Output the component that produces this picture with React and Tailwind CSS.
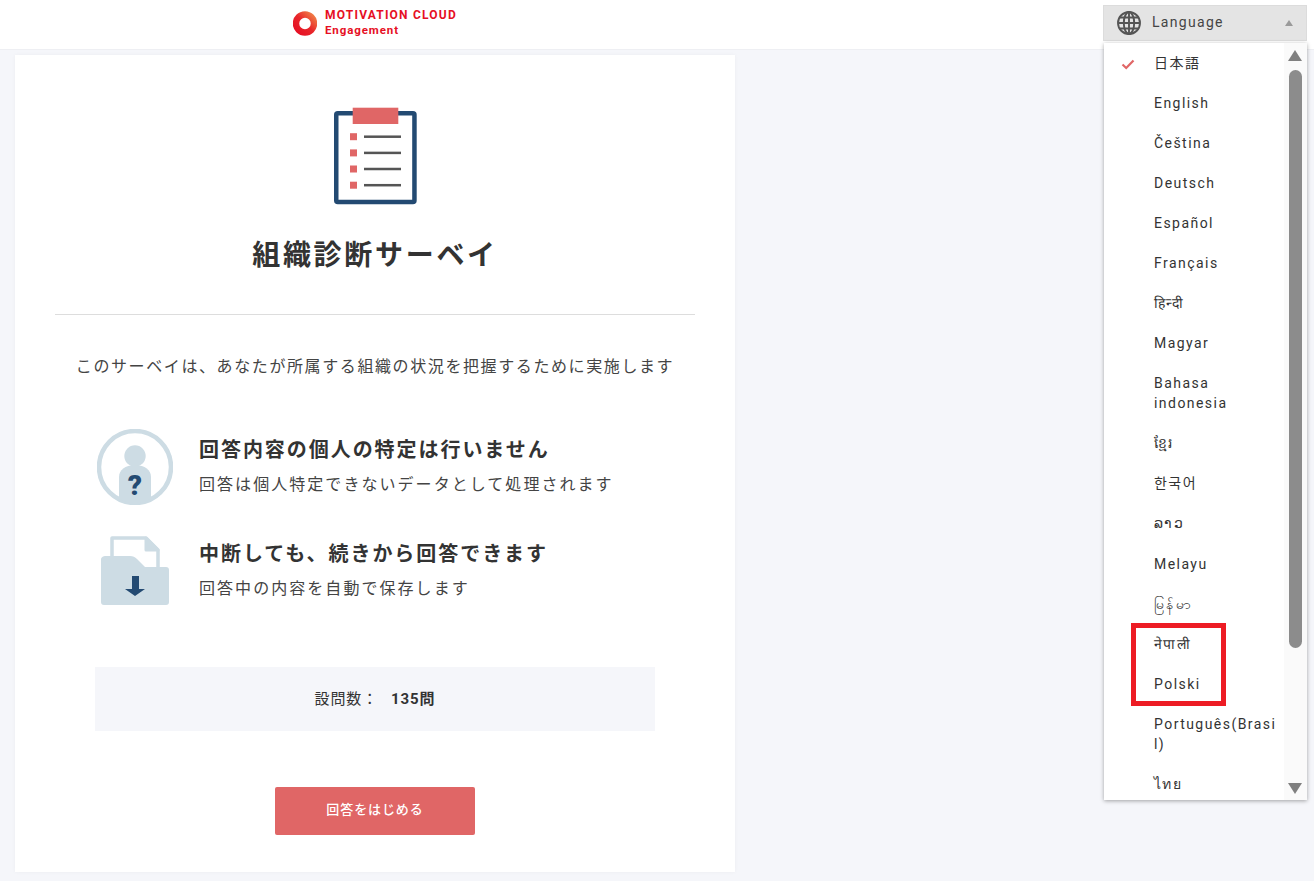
import React from 'react';

const FONT = "font-['Roboto','Noto_Sans_CJK_JP',sans-serif]";

const languages = [
  { label: '日本語', checked: true },
  { label: 'English' },
  { label: 'Čeština' },
  { label: 'Deutsch' },
  { label: 'Español' },
  { label: 'Français' },
  { label: 'हिन्दी' },
  { label: 'Magyar' },
  { label: 'Bahasa indonesia' },
  { label: 'ខ្មែរ' },
  { label: '한국어' },
  { label: 'ລາວ' },
  { label: 'Melayu' },
  { label: 'မြန်မာ' },
  { label: 'नेपाली' },
  { label: 'Polski' },
  { label: 'Português(Brasil)' },
  { label: 'ไทย' },
];

const Logo = () => (
  <div className="flex items-center gap-[8px]">
    <svg width="24" height="25" viewBox="0 0 24 25">
      <defs>
        <linearGradient id="ring" x1="0" y1="1" x2="1" y2="0">
          <stop offset="0" stopColor="#e60f24" />
          <stop offset="0.5" stopColor="#e8262a" />
          <stop offset="1" stopColor="#f08048" />
        </linearGradient>
      </defs>
      <circle cx="12" cy="12.500" r="9" fill="none" stroke="url(#ring)" strokeWidth="6.500" />
    </svg>
    <div className="flex flex-col font-['Roboto',sans-serif] font-bold text-[#e60f24] leading-none">
      <span className="text-[12px] leading-[15px] tracking-[1.2px] whitespace-nowrap">MOTIVATION CLOUD</span>
      <span className="text-[11.5px] leading-[15px] tracking-[0.9px]">Engagement</span>
    </div>
  </div>
);

const GlobeIcon = () => (
  <svg width="26" height="26" viewBox="0 0 26 26" fill="none" stroke="#555" strokeWidth="1.900">
    <circle cx="13" cy="13" r="11" />
    <ellipse cx="13" cy="13" rx="5.200" ry="11" />
    <path d="M13 2v22M2 13h22M3.600 7.500h18.800M3.600 18.500h18.800" />
  </svg>
);

const LanguageMenu = () => (
  <div className="absolute left-[1104px] top-[43px] w-[203px] h-[757px] bg-white shadow-[0_1px_4px_rgba(0,0,0,0.35)] overflow-hidden flex z-20">
    <ul className="w-[180px] shrink-0 -mt-[0.5px]">
      {languages.map((lang) => (
        <li key={lang.label} className="relative pl-[50px] pr-[6px] py-[10px] text-[14px] leading-[20.08px] tracking-[1.45px] text-[#333] break-words">
          {lang.checked && (
            <svg className="absolute left-[17px] top-[16px]" width="14" height="11" viewBox="0 0 14 11" fill="none" stroke="#e06666" strokeWidth="2.200">
              <path d="M1.500 5.500l3.700 3.500 7.300-7.500" />
            </svg>
          )}
          {lang.label}
        </li>
      ))}
    </ul>
    <div className="flex-1 flex flex-col items-center bg-[#fafafa] pr-[1px]">
      <div className="mt-[7px] w-0 h-0 border-x-[7.5px] border-x-transparent border-b-[11px] border-b-[#808080]" />
      <div className="mt-[9px] w-[13px] h-[578px] rounded-full bg-[#8c8c8c]" />
      <div className="mt-auto mb-[6px] w-0 h-0 border-x-[7.5px] border-x-transparent border-t-[11px] border-t-[#808080]" />
    </div>
  </div>
);

const Header = () => (
  <header className="relative h-[50px] bg-white border-b border-[#eeeff3]">
    <div className="absolute left-[293px] top-[8px]">
      <Logo />
    </div>
    <button className="absolute left-[1103px] top-[5px] w-[204px] h-[36px] bg-[#e4e4e4] border border-[#dcdcdc] flex items-center pl-[12px] pr-[13px]">
      <GlobeIcon />
      <span className="ml-[10px] mb-[1px] text-[14px] tracking-[1.3px] text-[#444]">Language</span>
      <span className="ml-auto w-0 h-0 border-x-[4px] border-x-transparent border-b-[6px] border-b-[#9a9a9a]" />
    </button>
  </header>
);

const ClipboardIcon = () => (
  <svg width="84" height="100" viewBox="0 0 84 100">
    <rect x="3.250" y="6.250" width="78.200" height="88.800" rx="1.500" fill="#fff" stroke="#234a72" strokeWidth="4.500" />
    <rect x="19.700" y="0.700" width="45.600" height="16.300" fill="#e06666" />
    {[29.700, 45.900, 62, 78.200].map((y) => (
      <g key={y}>
        <rect x="17" y={y - 3.500} width="7" height="7" fill="#e06666" />
        <rect x="31" y={y - 1.250} width="37" height="2.500" fill="#555" />
      </g>
    ))}
  </svg>
);

const PersonIcon = () => (
  <svg width="76" height="76" viewBox="0 0 76 76">
    <circle cx="38" cy="38" r="36" fill="none" stroke="#cddce4" strokeWidth="4.500" />
    <circle cx="38" cy="27" r="10.700" fill="#cddce4" />
    <path d="M22 70V48c0-7 6-12 16-12s16 5 16 12v22A36 36 0 0 1 22 70z" fill="#cddce4" />
    <text x="38" y="66" textAnchor="middle" fontFamily="Roboto, sans-serif" fontWeight="900" fontSize="28" fill="#234a72">?</text>
  </svg>
);

const FolderIcon = () => (
  <svg width="70" height="70" viewBox="0 0 70 70">
    <path d="M12 30V3h34l12 12v26" fill="#fff" stroke="#cddce4" strokeWidth="3.500" strokeLinejoin="round" />
    <path d="M46 3v12h12z" fill="#cddce4" stroke="#cddce4" strokeWidth="3" strokeLinejoin="round" />
    <path d="M1 25c0-3 2-4 5-4h24c3 0 5 1 7 3l8 8h21c2 0 3 1 3 3v32c0 2-1 3-3 3H4c-2 0-3-1-3-3z" fill="#cddce4" />
    <path d="M32 41h7v13h6l-10 7-10-7h7z" fill="#234a72" />
  </svg>
);

const Feature = ({ icon, title, text, className, textClass }) => (
  <div className={`flex items-start ${className}`}>
    <div className="w-[76px] flex justify-center shrink-0">{icon}</div>
    <div className={`ml-[26px] ${textClass}`}>
      <h3 className="text-[20px] leading-[28px] font-bold tracking-[1.95px] text-[#333] whitespace-nowrap">{title}</h3>
      <p className="mt-[11px] text-[16px] leading-[20px] tracking-[2.05px] text-[#444] whitespace-nowrap">{text}</p>
    </div>
  </div>
);

const Card = () => (
  <main className="ml-[15px] mt-[5px] w-[720px] h-[817px] bg-white shadow-[0_0_4px_rgba(0,0,0,0.04)] px-[40px] flex flex-col">
    <div className="mt-[52px] flex justify-center">
      <ClipboardIcon />
    </div>
    <h1 className="mt-[30px] text-center text-[28px] leading-[38px] font-bold tracking-[2.7px] text-[#333]">組織診断サーベイ</h1>
    <hr className="mt-[39px] border-[#ddd]" />
    <p className="mt-[41px] text-center text-[16px] leading-[22px] tracking-[1.6px] text-[#444] whitespace-nowrap">
      このサーベイは、あなたが所属する組織の状況を把握するために実施します
    </p>
    <div className="mt-[51px] pl-[42px]">
      <Feature textClass="pt-[7px]" icon={<PersonIcon />} title="回答内容の個人の特定は行いません" text="回答は個人特定できないデータとして処理されます" />
      <Feature className="mt-[30px]" textClass="pt-[5px]" icon={<FolderIcon />} title="中断しても、続きから回答できます" text="回答中の内容を自動で保存します" />
    </div>
    <div className="mt-[62px] mx-[40px] h-[64px] bg-[#f5f6fa] flex items-center justify-center text-[15px] tracking-[0.9px] text-[#333]">
      <span>設問数：</span>
      <span className="ml-[13px] font-bold">135問</span>
    </div>
    <div className="mt-[56px] flex justify-center">
      <button className="w-[200px] h-[48px] pb-[2px] rounded-[2px] bg-[#e06666] text-white text-[13px] font-medium tracking-[0.9px]">回答をはじめる</button>
    </div>
  </main>
);

export default function App() {
  return (
    <div className={`relative w-[1314px] h-[881px] overflow-hidden bg-[#f5f6fa] ${FONT}`}>
      <Header />
      <Card />
      <LanguageMenu />
      <div className="absolute left-[1131px] top-[623px] w-[95px] h-[83px] border-[5px] border-[#ed1c24] z-30" />
    </div>
  );
}
